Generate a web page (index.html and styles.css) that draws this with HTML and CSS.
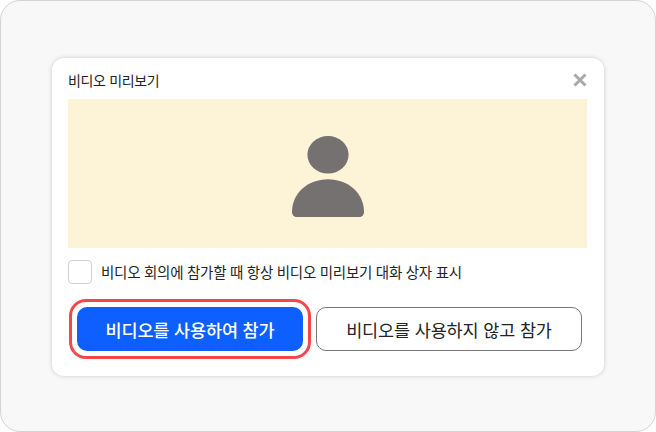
FILE: index.html
```html
<!DOCTYPE html>
<html lang="ko">
<head>
<meta charset="utf-8">
<title>비디오 미리보기</title>
<link rel="stylesheet" href="styles.css">
</head>
<body>
<div class="frame">
  <div class="card">
    <div class="header">
      <span class="title">비디오 미리보기</span>
      <svg class="close" width="16" height="16" viewBox="0 0 16 16" aria-hidden="true">
        <path d="M2.5 2.5 L13.5 13.5 M13.5 2.5 L2.5 13.5" stroke="#a9a9a9" stroke-width="3" fill="none"/>
      </svg>
    </div>
    <div class="preview">
      <svg width="72" height="81" viewBox="0 0 72 81" aria-hidden="true">
        <ellipse cx="36" cy="18.8" rx="20.6" ry="18.8" fill="#767171"/>
        <path d="M0 76 C0 57 16 43.3 36 43.3 C56 43.3 72 57 72 76 C72 79 70 81 67 81 L5 81 C2 81 0 79 0 76 Z" fill="#767171"/>
      </svg>
    </div>
    <div class="option">
      <span class="checkbox"></span>
      <span class="option-label">비디오 회의에 참가할 때 항상 비디오 미리보기 대화 상자 표시</span>
    </div>
    <div class="actions">
      <div class="focus-ring"><button class="btn btn-primary">비디오를 사용하여 참가</button></div>
      <button class="btn btn-outline">비디오를 사용하지 않고 참가</button>
    </div>
  </div>
</div>
</body>
</html>
```
FILE: styles.css
```css
* { box-sizing: border-box; }
html, body { margin: 0; padding: 0; }
body {
  width: 656px;
  height: 432px;
  background: #fff;
  font-family: "Noto Sans CJK KR", "Noto Sans", sans-serif;
  color: #232323;
}
.frame {
  width: 656px;
  height: 432px;
  background: #f8f8f8;
  border: 1px solid #d4d4d4;
  border-radius: 20px;
  padding: 57px 0 0 51px;
}
.card {
  width: 552px;
  height: 318px;
  background: #fff;
  border-radius: 12px;
  box-shadow: 0 0 5px rgba(0, 0, 0, 0.18);
  padding: 0 17px 0 16px;
}
.header {
  height: 41px;
  display: flex;
  align-items: center;
  justify-content: space-between;
  padding-top: 3px;
}
.title { font-size: 14px; line-height: 18px; letter-spacing: -0.35px; }
.close { margin-right: -1px; }
.preview {
  height: 149px;
  background: #fdf3d6;
  display: flex;
  align-items: center;
  justify-content: center;
  padding: 5px 0 0 1px;
}
.option {
  display: flex;
  align-items: center;
  gap: 9px;
  margin-top: 12px;
  height: 24px;
}
.checkbox {
  width: 24px;
  height: 24px;
  background: #fff;
  border: 1px solid #d0d0d0;
  border-radius: 4px;
}
.option-label { font-size: 14.5px; line-height: 18px; letter-spacing: -0.27px; }
.actions {
  display: flex;
  align-items: center;
  gap: 5px;
  margin-top: 15px;
  padding-left: 1px;
}
.focus-ring {
  padding: 5px;
  border: 3px solid #f5474b;
  border-radius: 17px;
  display: flex;
}
.btn {
  height: 44px;
  font-family: inherit;
  font-size: 17.5px;
  letter-spacing: -0.15px;
  border-radius: 10px;
  padding: 0;
}
.btn-primary {
  width: 226px;
  background: #0e5fff;
  color: #fff;
  border: 0;
  font-weight: 500;
}
.btn-outline {
  width: 266px;
  background: #fff;
  color: #232323;
  border: 1px solid #777;
  font-weight: 400;
}
```
